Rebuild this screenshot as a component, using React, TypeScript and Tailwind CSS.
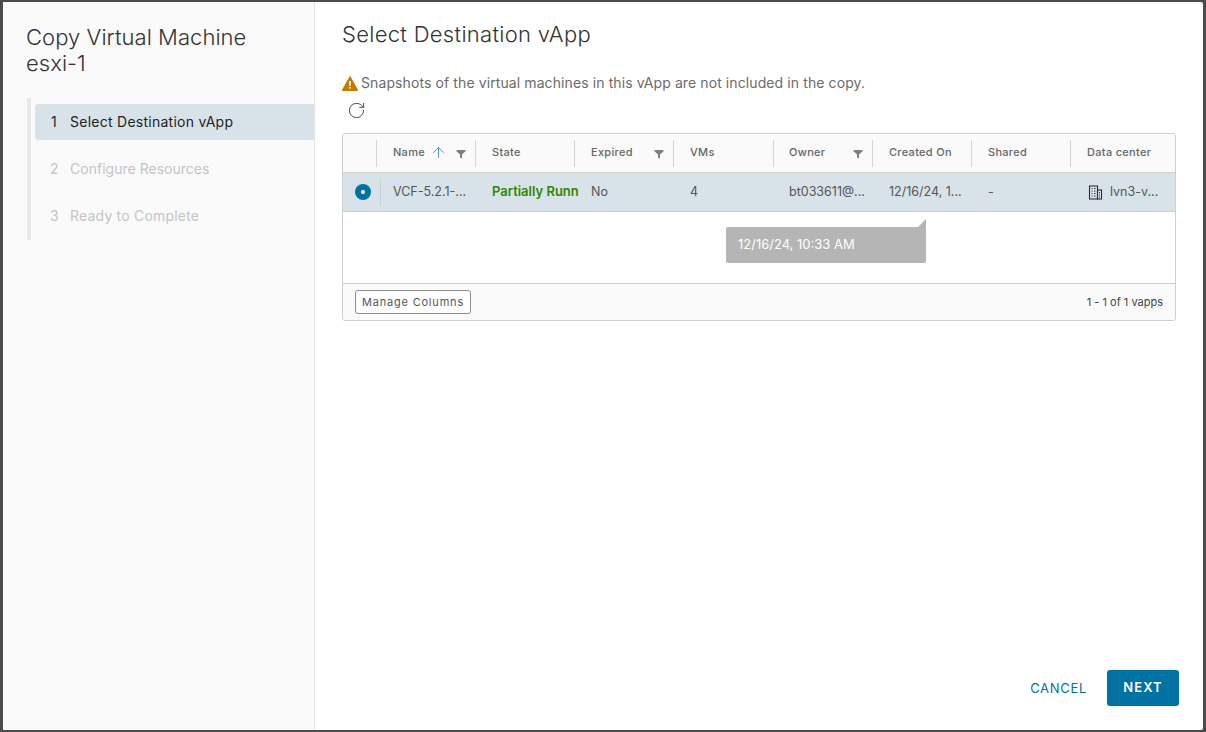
import React from 'react';
import { ArrowUp, RotateCw } from 'lucide-react';

const columns = [
  { label: 'Name', width: 'w-[99px]', pad: 'pl-[16px]', sort: true, filter: true },
  { label: 'State', width: 'w-[99px]', pad: 'pl-[16px]' },
  { label: 'Expired', width: 'w-[99px]', pad: 'pl-[16px]', filter: true },
  { label: 'VMs', width: 'w-[100px]', pad: 'pl-[16px]' },
  { label: 'Owner', width: 'w-[99px]', pad: 'pl-[15px]', filter: true },
  { label: 'Created On', width: 'w-[99px]', pad: 'pl-[16px]' },
  { label: 'Shared', width: 'w-[99px]', pad: 'pl-[16px]' },
  { label: 'Data center', width: 'flex-1', pad: 'pl-[16px]' },
];

function FilterIcon() {
  return (
    <svg width="10" height="10" viewBox="0 0 10 10" className="absolute right-[10px] top-[15px]">
      <path d="M0.5 1h9v1.2L6 5.4V9.5L4 8.4V5.4L0.5 2.2z" fill="#7b7f83" />
    </svg>
  );
}

function BuildingIcon() {
  return (
    <svg width="15" height="15" viewBox="0 0 15 15" fill="none" stroke="#2e2e2e" strokeWidth="1.1">
      <rect x="1.5" y="1" width="8" height="13" />
      <rect x="9.5" y="5" width="4" height="9" />
      <path d="M3.5 3.5h1M6 3.5h1.500M3.500 6h1M6 6h1.500M3.500 8.500h1M6 8.500h1.500M3.500 11h1M6 11h1.500M11 7.500h1M11 10h1M11 12h1" />
    </svg>
  );
}

export default function App() {
  return (
    <div className="w-[1206px] h-[732px] bg-[#4b4b4b] pt-[2px] pl-[3px] pr-[3px] pb-[2px] font-['Inter','Noto_Sans',sans-serif] overflow-hidden">
      <div className="h-[728px] bg-white flex rounded-[2px]">
        {/* Sidebar */}
        <aside className="w-[312px] shrink-0 bg-[#fafafa] border-r border-[#e3e5e6] pt-[22px]">
          <h1 className="pl-[23px] text-[22px] leading-[26px] font-light text-[#333] tracking-[0.05px]">
            Copy Virtual Machine
            <br />
            esxi-1
          </h1>
          <nav className="ml-[24px] mt-[22px] border-l-[4px] border-[#e8e8e8] h-[142px] pt-[6px]">
            <div className="ml-[4px] h-[36px] pb-[2px] bg-[#d8e3e9] rounded-l-[3px] flex items-center pl-[16px] text-[14px] text-[#222]">
              <span className="w-[19px]">1</span>
              <span className="tracking-[0.26px]">Select Destination vApp</span>
            </div>
            <div className="ml-[4px] h-[36px] pb-[2px] mt-[11px] flex items-center pl-[15px] text-[14px] text-[#c4c4c4]">
              <span className="w-[20px]">2</span>
              <span className="tracking-[0.02px]">Configure Resources</span>
            </div>
            <div className="ml-[4px] h-[36px] pb-[2px] mt-[11px] flex items-center pl-[15px] text-[14px] text-[#c4c4c4]">
              <span className="w-[20px]">3</span>
              <span className="tracking-[0.2px]">Ready to Complete</span>
            </div>
          </nav>
        </aside>

        {/* Main */}
        <main className="flex-1 flex flex-col pl-[27px] pr-[24px] pt-[18px] pb-[24px]">
          <h2 className="text-[22px] leading-[28px] font-light text-[#333] tracking-[0.3px]">Select Destination vApp</h2>

          <div className="mt-[24px] flex items-center h-[20px] text-[14px] text-[#6b6b6b]">
            <svg width="16" height="15" viewBox="0 0 16 15" className="mr-[3px] mt-[2px]">
              <path d="M8 0.500L15.800 14.500H0.200z" fill="#c27b00" stroke="#c27b00" strokeLinejoin="round" />
              <rect x="7.200" y="5" width="1.600" height="5" fill="#fff" />
              <rect x="7.200" y="11" width="1.600" height="1.600" fill="#fff" />
            </svg>
            <span className="tracking-[0.1px]">Snapshots of the virtual machines in this vApp are not included in the copy.</span>
          </div>

          <div className="mt-[8px] h-[20px] pl-[5px] flex items-center">
            <RotateCw size={19} strokeWidth={1.25} className="text-[#4a4a4a]" />
          </div>

          {/* Datagrid */}
          <div className="relative mt-[13px] w-[834px] h-[188px] border border-[#cfcfcf] rounded-[3px] flex flex-col">
            <div className="h-[39px] bg-[#fafafa] border-b border-[#cfcfcf] rounded-t-[3px] flex">
              <div className="w-[34px] shrink-0 relative">
                <div className="absolute right-0 top-[6px] h-[27px] w-px bg-[#d4d4d4]" />
              </div>
              {columns.map((col, i) => (
                <div key={col.label} className={`${col.width} ${col.pad} relative pt-[10px] text-[11px] leading-[16px] font-medium tracking-[0.3px] text-[#666]`}>
                  {col.label}
                  {col.sort && <ArrowUp size={17} strokeWidth={1.4} className="absolute left-[53px] top-[10px] text-[#4a9bc7]" />}
                  {col.filter && <FilterIcon />}
                  {i < columns.length - 1 && <div className="absolute right-0 top-[6px] h-[27px] w-px bg-[#d4d4d4]" />}
                </div>
              ))}
            </div>

            <div className="h-[39px] bg-[#d8e3e9] border-b border-[#c6d2d9] flex items-center text-[12.5px] text-[#555]">
              <div className="w-[38px] shrink-0 h-[27px] border-r border-[#c4ced4] flex items-center pl-[12px]">
                <div className="w-[16px] h-[16px] rounded-full bg-[#0072a3] flex items-center justify-center">
                  <div className="w-[4px] h-[4px] rounded-full bg-white" />
                </div>
              </div>
              <div className="w-[95px] pl-[12px]">VCF-5.2.1-...</div>
              <div className="w-[99px] pl-[16px] text-[13px] font-semibold text-[#318700] whitespace-nowrap">Partially Runn</div>
              <div className="w-[99px] pl-[16px]">No</div>
              <div className="w-[99px] pl-[16px]">4</div>
              <div className="w-[99px] pl-[16px]">bt033611@...</div>
              <div className="w-[99px] pl-[17px]">12/16/24, 1...</div>
              <div className="w-[100px] pl-[17px]">-</div>
              <div className="flex-1 pl-[17px] flex items-center gap-[7px]">
                <BuildingIcon />
                <span>lvn3-v...</span>
              </div>
            </div>

            <div className="flex-1" />

            <div className="h-[37px] bg-[#fafafa] border-t border-[#cfcfcf] rounded-b-[3px] flex items-center justify-between pl-[12px] pr-[12px]">
              <div className="h-[24px] w-[116px] border border-[#8c8c8c] rounded-[3px] bg-white flex items-center justify-center text-[11px] tracking-[0.8px] text-[#555]">
                Manage Columns
              </div>
              <div className="text-[11px] text-[#444]">1 - 1 of 1 vapps</div>
            </div>

            {/* Tooltip */}
            <div className="absolute left-[383px] top-[93px] w-[200px] h-[36px] bg-[#b5b5b5] rounded-[2px] rounded-tr-none flex items-center pl-[12px] text-[13px] text-white">
              12/16/24, 10:33 AM
              <svg width="8" height="8" viewBox="0 0 8 8" className="absolute right-0 top-[-8px]">
                <path d="M8 0V8H0z" fill="#b5b5b5" />
              </svg>
            </div>
          </div>

          {/* Footer */}
          <div className="mt-auto flex justify-end items-center">
            <button className="text-[13px] pt-[2px] tracking-[0.7px] text-[#0072a3] mr-[20px]">CANCEL</button>
            <button className="w-[72px] h-[36px] rounded-[3px] bg-[#0072a3] text-white text-[13px] font-semibold tracking-[1.1px]">NEXT</button>
          </div>
        </main>
      </div>
    </div>
  );
}
